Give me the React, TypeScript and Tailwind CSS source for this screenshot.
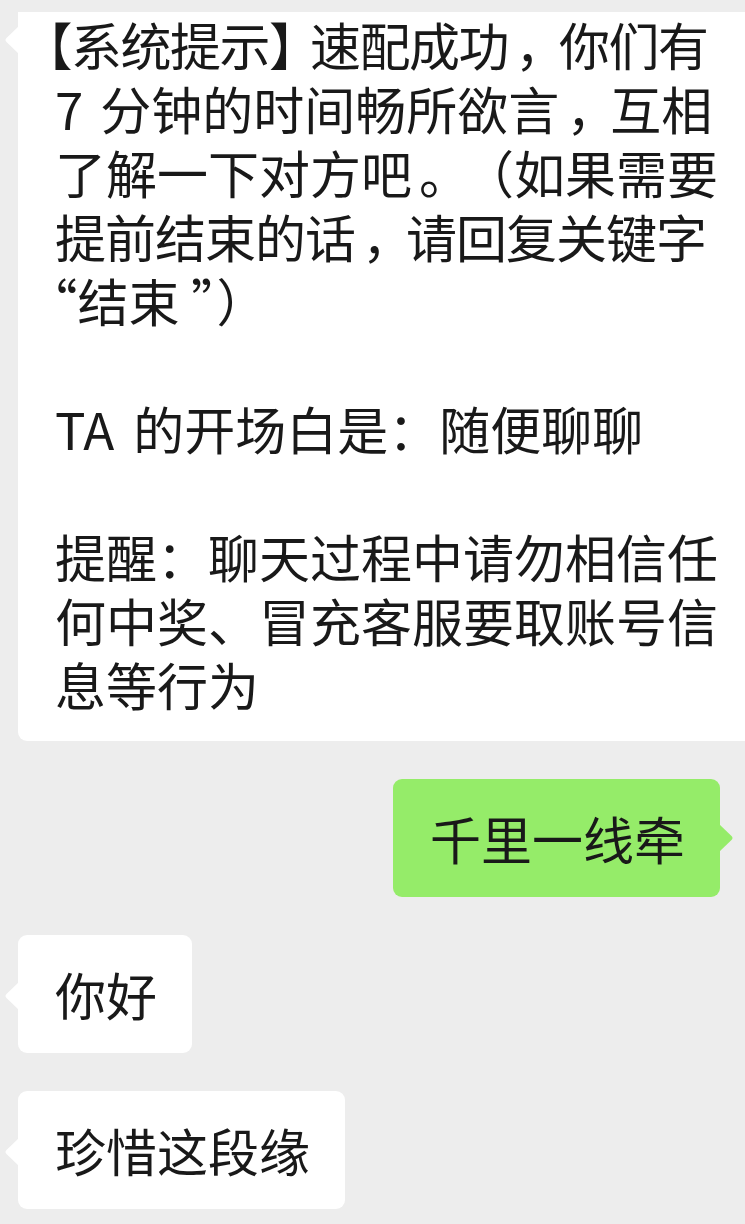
import React from 'react';

// 左侧白色气泡的小尖角
const TailLeft = ({ top }: { top: number }) => (
  <svg
    className="absolute left-[-14px]"
    style={{ top }}
    width="15"
    height="28"
    viewBox="0 0 15 28"
  >
    <path d="M15 0 L2.5 12 Q0.5 14 2.5 16 L15 28 Z" fill="#ffffff" />
  </svg>
);

const TailRight = ({ top }: { top: number }) => (
  <svg
    className="absolute right-[-14px]"
    style={{ top }}
    width="15"
    height="28"
    viewBox="0 0 15 28"
  >
    <path d="M0 0 L12.5 12 Q14.5 14 12.5 16 L0 28 Z" fill="#95ec69" />
  </svg>
);

const font = "font-['Noto_Sans_CJK_SC','Noto_Sans',sans-serif]";

// 逗号、句号：半宽字形放进一格里，稍微往中间挪
const P = ({ children }: { children: React.ReactNode }) => (
  <span className="inline-block w-[51px] pl-[7px] [font-feature-settings:'halt']">{children}</span>
);

const Gap = ({ w }: { w: string }) => <span className={`inline-block ${w}`} />;

const Bubble = ({ text, mine }: { text: string; mine?: boolean }) => (
  <div className={`flex ${mine ? 'justify-end pr-[25px]' : 'pl-[18px]'}`}>
    <div
      className={`relative rounded-[9px] pl-[37px] pr-[35px] py-[27px] text-[51px] leading-[64px] text-[#191919] whitespace-nowrap ${
        mine ? 'bg-[#95ec69]' : 'bg-white'
      }`}
    >
      {mine ? <TailRight top={45} /> : <TailLeft top={47} />}
      {text}
    </div>
  </div>
);

export default function App() {
  return (
    <div
      className={`relative h-[1224px] w-[745px] overflow-hidden bg-[#ededed] pt-[12px] [text-spacing-trim:space-all] ${font}`}
    >
      <div className="flex flex-col gap-[38px]">
        {/* 系统提示 */}
        <div className="pl-[18px]">
          <div className="relative w-[760px] rounded-bl-[9px] bg-white pl-[37px] pb-[25px] text-[51px] leading-[64px] text-[#191919] whitespace-nowrap">
            <TailLeft top={14} />
            <div className="tracking-[-1.5px]">
              <span className="ml-[-8px] [font-feature-settings:'halt']">【</span>系统提示
              <span className="inline-block w-[41px] [font-feature-settings:'halt']">】</span>速配成功<P>，</P>你们有
            </div>
            <div>
              7<Gap w="w-[17px]" />分钟的时间畅所欲言<P>，</P>互相
            </div>
            <div>
              了解一下对方吧<P>。</P>（如果需要
            </div>
            <div className="tracking-[-1px]">
              提前结束的话<P>，</P>请回复关键字
            </div>
            <div>
              <span className="ml-[-3px] [font-feature-settings:'halt']">“</span>结束 <span className="[font-feature-settings:'halt']">”</span>）
            </div>
            <div className="h-[64px]" />
            <div>
              TA<Gap w="w-[19px]" />的开场白是：随便聊聊
            </div>
            <div className="h-[64px]" />
            <div>提醒：聊天过程中请勿相信任</div>
            <div>何中奖、冒充客服要取账号信</div>
            <div>息等行为</div>
          </div>
        </div>

        <Bubble text="千里一线牵" mine />
        <Bubble text="你好" />
        <Bubble text="珍惜这段缘" />
      </div>
    </div>
  );
}
